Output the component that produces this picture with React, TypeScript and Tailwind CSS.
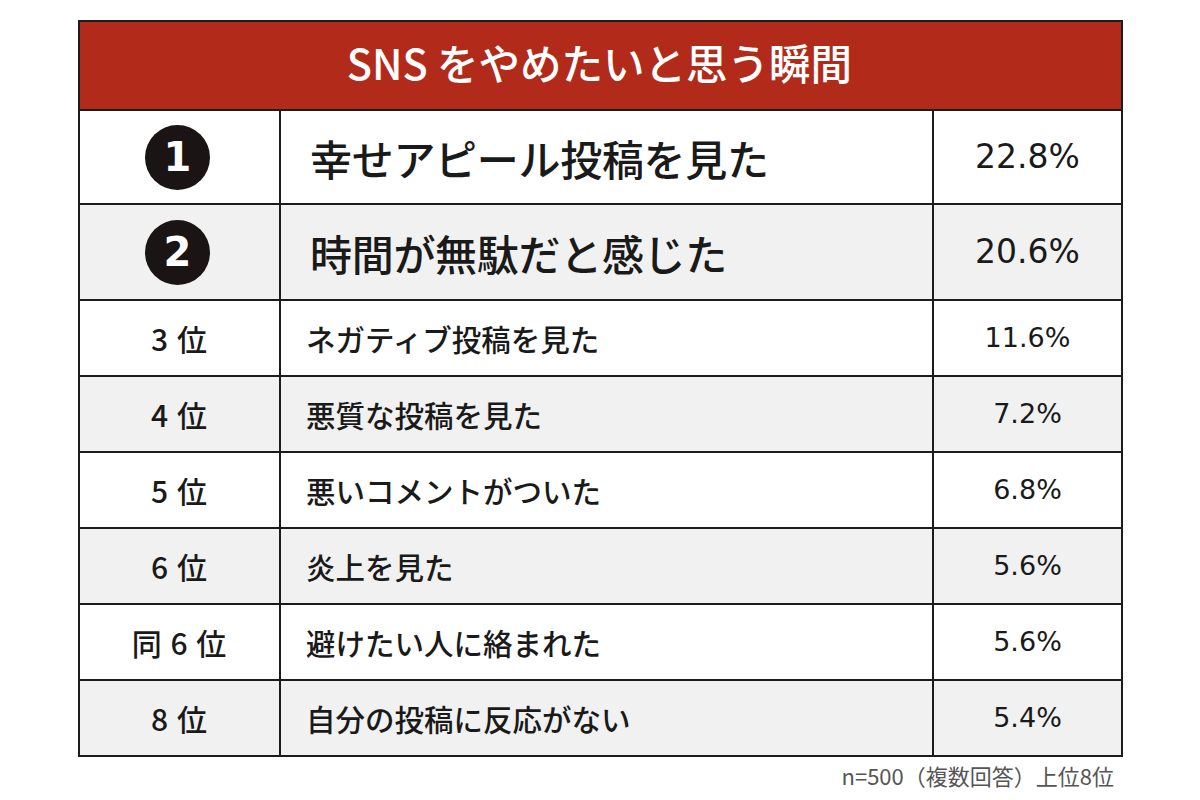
import React from 'react';

interface Row {
  rank: string;
  label: string;
  value: string;
  top?: boolean;
  h: string;
}

const rows: Row[] = [
  { rank: '1', label: '幸せアピール投稿を見た', value: '22.8%', top: true, h: 'h-[94px]' },
  { rank: '2', label: '時間が無駄だと感じた', value: '20.6%', top: true, h: 'h-[96px]' },
  { rank: '3 位', label: 'ネガティブ投稿を見た', value: '11.6%', h: 'h-[76px]' },
  { rank: '4 位', label: '悪質な投稿を見た', value: '7.2%', h: 'h-[76px]' },
  { rank: '5 位', label: '悪いコメントがついた', value: '6.8%', h: 'h-[76px]' },
  { rank: '6 位', label: '炎上を見た', value: '5.6%', h: 'h-[76px]' },
  { rank: '同 6 位', label: '避けたい人に絡まれた', value: '5.6%', h: 'h-[76px]' },
  { rank: '8 位', label: '自分の投稿に反応がない', value: '5.4%', h: 'h-[74px]' },
];

const jp = { fontFamily: '"Noto Sans CJK JP", "Noto Sans", sans-serif' };
const num = { fontFamily: '"DejaVu Sans", "Noto Sans CJK JP", sans-serif' };

export default function App() {
  return (
    <div className="w-[1200px] h-[800px] bg-white pt-[20px] pl-[78px]" style={jp}>
      <div className="w-[1045px] border-2 border-[#1c1c1c]">
        {/* title */}
        <div className="h-[89px] bg-[#b12a1a] border-b-2 border-[#1c1c1c] flex items-center justify-center">
          <span className="text-white text-[41.5px] font-medium mt-[-6px] ml-[-2px]">SNS をやめたいと思う瞬間</span>
        </div>

        {rows.map((row, i) => (
          <div
            key={i}
            className={`grid grid-cols-[201px_653px_1fr] ${i === rows.length - 1 ? '' : 'border-b-2 border-[#1c1c1c]'} ${
              i % 2 === 1 ? 'bg-[#f1f1f1]' : 'bg-white'
            } ${row.h}`}
          >
            <div className="border-r-2 border-[#1c1c1c] flex items-center justify-center">
              {row.top ? (
                <div className="w-[65px] h-[65px] rounded-full bg-[#1a1414] flex items-center justify-center mr-[4px]">
                  <span className="text-white text-[40px] font-bold leading-none" style={num}>
                    {row.rank}
                  </span>
                </div>
              ) : (
                <span className="text-[30px] font-medium text-[#1a1a1a] tracking-[1px]">{row.rank}</span>
              )}
            </div>
            <div className="border-r-2 border-[#1c1c1c] flex items-center">
              {row.top ? (
                <span className="pl-[29px] text-[42px] font-medium text-[#1a1a1a] tracking-[-0.3px]">{row.label}</span>
              ) : (
                <span className="pl-[25px] text-[29.5px] font-medium text-[#1a1a1a]">{row.label}</span>
              )}
            </div>
            <div className="flex items-center justify-center">
              <span className={`text-[#1a1a1a] ${row.top ? 'text-[33px]' : 'text-[27px]'}`} style={num}>
                {row.value}
              </span>
            </div>
          </div>
        ))}
      </div>
      <div className="w-[1045px] flex justify-end pr-[9px] mt-[2px]">
        <span className="text-[22px] text-[#555]">n=500（複数回答）上位8位</span>
      </div>
    </div>
  );
}
